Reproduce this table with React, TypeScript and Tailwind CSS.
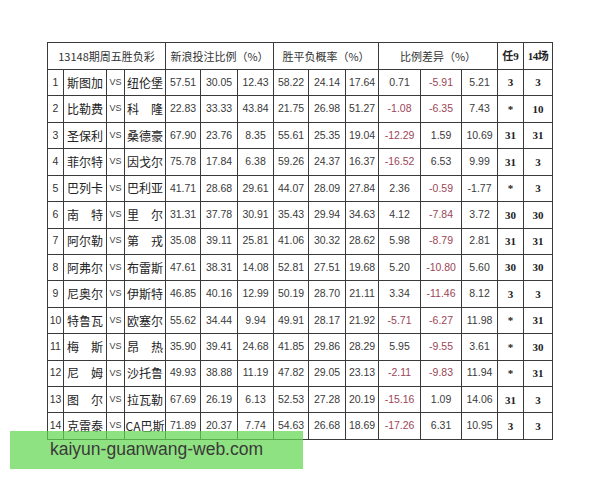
import React from "react";

type Row = [string, string, string, string[], string, string];

const rows: Row[] = [
  ["1", "斯图加", "纽伦堡", ["57.51", "30.05", "12.43", "58.22", "24.14", "17.64", "0.71", "-5.91", "5.21"], "3", "3"],
  ["2", "比勒费", "科　隆", ["22.83", "33.33", "43.84", "21.75", "26.98", "51.27", "-1.08", "-6.35", "7.43"], "*", "10"],
  ["3", "圣保利", "桑德豪", ["67.90", "23.76", "8.35", "55.61", "25.35", "19.04", "-12.29", "1.59", "10.69"], "31", "31"],
  ["4", "菲尔特", "因戈尔", ["75.78", "17.84", "6.38", "59.26", "24.37", "16.37", "-16.52", "6.53", "9.99"], "31", "3"],
  ["5", "巴列卡", "巴利亚", ["41.71", "28.68", "29.61", "44.07", "28.09", "27.84", "2.36", "-0.59", "-1.77"], "*", "3"],
  ["6", "南　特", "里　尔", ["31.31", "37.78", "30.91", "35.43", "29.94", "34.63", "4.12", "-7.84", "3.72"], "30", "30"],
  ["7", "阿尔勒", "第　戎", ["35.08", "39.11", "25.81", "41.06", "30.32", "28.62", "5.98", "-8.79", "2.81"], "31", "31"],
  ["8", "阿弗尔", "布雷斯", ["47.61", "38.31", "14.08", "52.81", "27.51", "19.68", "5.20", "-10.80", "5.60"], "30", "30"],
  ["9", "尼奥尔", "伊斯特", ["46.85", "40.16", "12.99", "50.19", "28.70", "21.11", "3.34", "-11.46", "8.12"], "3", "3"],
  ["10", "特鲁瓦", "欧塞尔", ["55.62", "34.44", "9.94", "49.91", "28.17", "21.92", "-5.71", "-6.27", "11.98"], "*", "31"],
  ["11", "梅　斯", "昂　热", ["35.90", "39.41", "24.68", "41.85", "29.86", "28.29", "5.95", "-9.55", "3.61"], "*", "30"],
  ["12", "尼　姆", "沙托鲁", ["49.93", "38.88", "11.19", "47.82", "29.05", "23.13", "-2.11", "-9.83", "11.94"], "*", "31"],
  ["13", "图　尔", "拉瓦勒", ["67.69", "26.19", "6.13", "52.53", "27.28", "20.19", "-15.16", "1.09", "14.06"], "31", "3"],
  ["14", "克雷泰", "CA巴斯", ["71.89", "20.37", "7.74", "54.63", "26.68", "18.69", "-17.26", "6.31", "10.95"], "3", "3"],
];

const widths = [16, 43, 18, 41, 35, 37, 36, 35, 37, 33, 42, 41, 36, 26, 29];

const cjk = "font-['Noto_Sans_CJK_SC','Noto_Sans_CJK_SC',sans-serif]";
const num = "font-['Liberation_Sans',sans-serif]";
const cell = "border border-[#3a3a3a] p-0 text-center align-middle whitespace-nowrap overflow-hidden";

export default function App() {
  return (
    <div className="relative w-[600px] h-[480px] bg-white overflow-hidden">
      <div className="pt-[42px] pl-[47px]">
        <table className="border-collapse table-fixed w-[505px] text-[#2a2a2a]">
          <colgroup>
            {widths.map((w, i) => (
              <col key={i} style={{ width: w }} />
            ))}
          </colgroup>
          <thead>
            <tr className="h-[27px]">
              <th colSpan={4} className={`${cell} ${cjk} font-normal text-[11px] text-[#333]`}>
                13148期周五胜负彩
              </th>
              <th colSpan={3} className={`${cell} ${cjk} font-normal text-[11px] text-[#333]`}>
                新浪投注比例（%）
              </th>
              <th colSpan={3} className={`${cell} ${cjk} font-normal text-[11px] text-[#333]`}>
                胜平负概率（%）
              </th>
              <th colSpan={3} className={`${cell} ${cjk} font-normal text-[11px] text-[#333]`}>
                比例差异（%）
              </th>
              <th className={`${cell} font-['Liberation_Serif','Noto_Sans_CJK_SC',serif] font-bold text-[11px] text-[#222]`}>
                任9
              </th>
              <th className={`${cell} font-['Liberation_Serif','Noto_Sans_CJK_SC',serif] font-bold text-[11px] text-[#222] tracking-[-0.5px]`}>
                14场
              </th>
            </tr>
          </thead>
          <tbody>
            {rows.map((r) => (
              <tr key={r[0]} className="h-[26.43px]">
                <td className={`${cell} ${num} text-[10.5px] text-[#333]`}>{r[0]}</td>
                <td className={`${cell} ${cjk} text-[12px] text-[#222]`}>{r[1]}</td>
                <td className={`${cell} ${num} text-[9px] text-[#444]`}>VS</td>
                <td className={`${cell} ${cjk} text-[12px] text-[#222]`}>{r[2]}</td>
                {r[3].map((v, i) => (
                  <td
                    key={i}
                    className={`${cell} ${num} text-[10.5px] ${
                      v.startsWith("-") && i >= 6 && i <= 7 ? "text-[#9c4658]" : "text-[#3a3a3a]"
                    }`}
                  >
                    {v}
                  </td>
                ))}
                <td className={`${cell} font-['Liberation_Serif',serif] font-bold text-[11px] text-[#222]`}>{r[4]}</td>
                <td className={`${cell} font-['Liberation_Serif',serif] font-bold text-[11px] text-[#222]`}>{r[5]}</td>
              </tr>
            ))}
          </tbody>
        </table>
      </div>
      <div className="absolute left-[10px] top-[431px] w-[293px] h-[38px] bg-[rgba(100,215,80,0.72)] flex items-center pl-[40px]">
        <span className="font-['Liberation_Sans',sans-serif] text-[17.5px] text-[#3a3a3a] leading-none">
          kaiyun-guanwang-web.com
        </span>
      </div>
    </div>
  );
}
